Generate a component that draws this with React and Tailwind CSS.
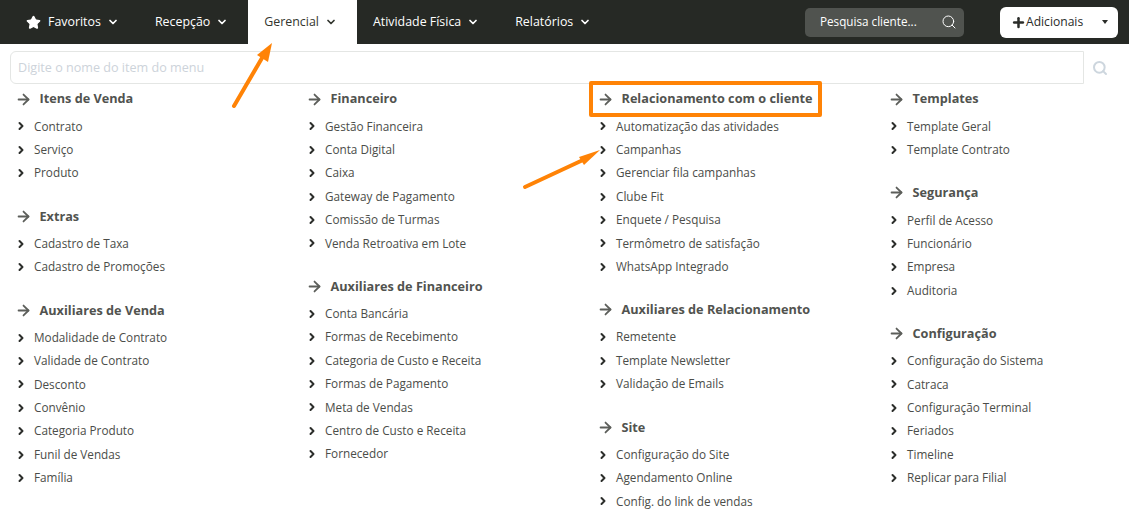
import { ArrowRight, ChevronDown, ChevronRight, Plus, Search, Star } from 'lucide-react';

const COLUMNS = [
  [
    { title: 'Itens de Venda', items: ['Contrato', 'Serviço', 'Produto'] },
    { title: 'Extras', items: ['Cadastro de Taxa', 'Cadastro de Promoções'] },
    {
      title: 'Auxiliares de Venda',
      items: ['Modalidade de Contrato', 'Validade de Contrato', 'Desconto', 'Convênio', 'Categoria Produto', 'Funil de Vendas', 'Família'],
    },
  ],
  [
    {
      title: 'Financeiro',
      items: ['Gestão Financeira', 'Conta Digital', 'Caixa', 'Gateway de Pagamento', 'Comissão de Turmas', 'Venda Retroativa em Lote'],
    },
    {
      title: 'Auxiliares de Financeiro',
      items: ['Conta Bancária', 'Formas de Recebimento', 'Categoria de Custo e Receita', 'Formas de Pagamento', 'Meta de Vendas', 'Centro de Custo e Receita', 'Fornecedor'],
    },
  ],
  [
    {
      title: 'Relacionamento com o cliente',
      items: ['Automatização das atividades', 'Campanhas', 'Gerenciar fila campanhas', 'Clube Fit', 'Enquete / Pesquisa', 'Termômetro de satisfação', 'WhatsApp Integrado'],
    },
    { title: 'Auxiliares de Relacionamento', items: ['Remetente', 'Template Newsletter', 'Validação de Emails'] },
    { title: 'Site', items: ['Configuração do Site', 'Agendamento Online', 'Config. do link de vendas'] },
  ],
  [
    { title: 'Templates', items: ['Template Geral', 'Template Contrato'] },
    { title: 'Segurança', items: ['Perfil de Acesso', 'Funcionário', 'Empresa', 'Auditoria'] },
    {
      title: 'Configuração',
      items: ['Configuração do Sistema', 'Catraca', 'Configuração Terminal', 'Feriados', 'Timeline', 'Replicar para Filial'],
    },
  ],
];

function NavItem({ label, active, star }) {
  return (
    <div className={`flex h-11 items-center pr-[20px] pl-4 text-[12.4px] ${active ? 'bg-white text-[#33362f]' : 'text-white'}`}>
      {star && <Star size={15} fill="currentColor" className="mr-[7px]" />}
      <span>{label}</span>
      <ChevronDown size={12} strokeWidth={3.5} className="ml-[6px]" />
    </div>
  );
}

function Section({ title, items }) {
  return (
    <div className="mb-[20.5px]">
      <div className="flex h-[22px] items-center text-[12.7px] font-bold text-[#51534f]">
        <ArrowRight size={17} strokeWidth={2.5} className="mr-[7.5px] -ml-[3px] text-[#5c5e5a]" />
        <span>{title}</span>
      </div>
      <ul className="mt-[4.7px]">
        {items.map((item) => (
          <li key={item} className="flex h-[23.4px] items-center text-[11.75px] text-[#4b4d49]">
            <ChevronRight size={12} strokeWidth={4} className="mr-[7.5px] -ml-[3.5px] text-[#2c2e2b]" />
            {item}
          </li>
        ))}
      </ul>
    </div>
  );
}

function Arrow({ x1, y1, x2, y2, head }) {
  return (
    <svg className="pointer-events-none absolute top-0 left-0" width="1129" height="524" fill="none">
      <line x1={x1} y1={y1} x2={x2} y2={y2} stroke="#ff8306" strokeWidth="4" strokeLinecap="round" />
      <polygon points={head} fill="#ff8306" />
    </svg>
  );
}

export default function App() {
  return (
    <div className="relative h-[524px] w-[1129px] overflow-hidden bg-white font-['Open_Sans',sans-serif]">
      <header className="flex h-11 items-center bg-[#262925] pl-[10px]">
        <NavItem label="Favoritos" star />
        <NavItem label="Recepção" />
        <NavItem label="Gerencial" active />
        <NavItem label="Atividade Física" />
        <NavItem label="Relatórios" />
        <div className="ml-auto flex items-center">
          <div className="flex h-[29px] w-[159px] items-center justify-between rounded-[5px] bg-[#50534f] pr-[7px] pl-[15px] text-[11.7px] text-white">
            <span>Pesquisa cliente...</span>
            <Search size={16} strokeWidth={1.5} />
          </div>
          <div className="mr-[11px] ml-[36px] flex h-[31px] w-[118px] items-center rounded-[6px] bg-white pl-[11px] text-[12.1px] text-[#2a2c29]">
            <Plus size={15} strokeWidth={4} />
            <span>Adicionais</span>
            <span className="mr-[10px] ml-auto h-0 w-0 border-x-[3.5px] border-t-[4px] border-x-transparent border-t-[#2a2c29]" />
          </div>
        </div>
      </header>

      <div className="mt-[7px] flex items-center pl-[10px]">
        <div className="flex h-[33px] w-[1074px] items-center rounded-l-[6px] border border-[#e4e6e4] pt-px pl-[7px] text-[12.6px] text-[#cdd3da]">
          Digite o nome do item do menu
        </div>
        <Search size={16} strokeWidth={3} className="ml-[8px] text-[#cdd6de]" />
      </div>

      <div className="mt-[4px] grid grid-cols-[291px_291px_291px_1fr] pl-[18px]">
        {COLUMNS.map((sections) => (
          <div key={sections[0].title}>
            {sections.map((section) => (
              <Section key={section.title} title={section.title} items={section.items} />
            ))}
          </div>
        ))}
      </div>

      {/* annotations drawn over the screenshot */}
      <div className="absolute top-[81px] left-[589px] h-[36px] w-[233px] rounded-[2px] border-[4px] border-[#ff8306]" />
      <Arrow x1={234} y1={106} x2={262} y2={58} head="272,43 268,62 257,55" />
      <Arrow x1={525} y1={187} x2={583} y2={160} head="600,150 584,165 579,157" />
    </div>
  );
}
